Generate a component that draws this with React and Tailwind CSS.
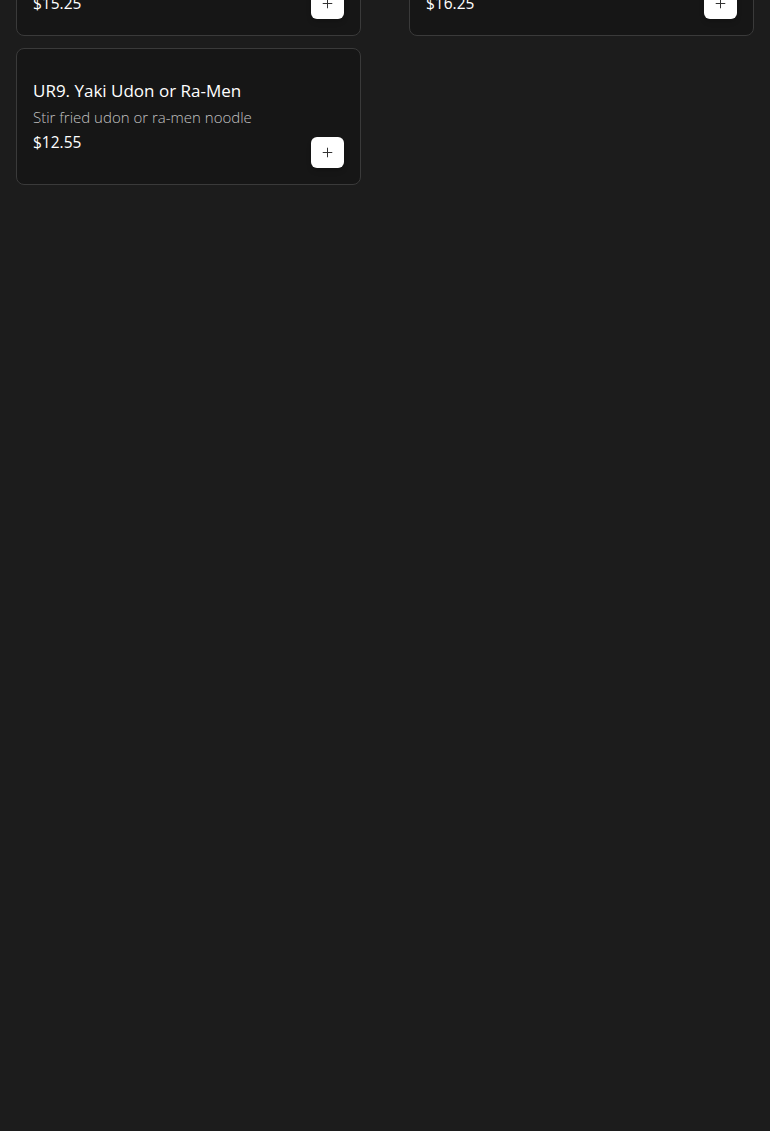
import { Plus } from 'lucide-react';

const items = [
  {
    id: 'UR7',
    name: 'UR7. Nabeyaki Udon',
    description: 'Udon noodle soup with shrimp tempura, chicken, egg and vegetables',
    price: '$15.25',
  },
  {
    id: 'UR8',
    name: 'UR8. Tempura Udon',
    description: 'Udon noodle soup served with shrimp and vegetable tempura',
    price: '$16.25',
  },
  {
    id: 'UR9',
    name: 'UR9. Yaki Udon or Ra-Men',
    description: 'Stir fried udon or ra-men noodle',
    price: '$12.55',
  },
];

const MenuCard = ({ item }) => {
  return (
    <div className="flex min-h-[137px] items-center justify-between gap-4 rounded-lg border border-[#3a3a3a] bg-[#161616] p-4">
      <div className="flex flex-col">
        <h3 className="text-[17px] font-medium leading-6 text-white">{item.name}</h3>
        <p className="mt-1 text-[15px] font-light leading-5 text-[#c2c2c2]">{item.description}</p>
        <span className="mt-[3px] text-[15.5px] leading-6 text-white">{item.price}</span>
      </div>
      <button className="flex h-[31px] w-[33px] shrink-0 items-center justify-center self-end rounded-md bg-white shadow-md">
        <Plus size={15} strokeWidth={1.6} className="text-[#333]" />
      </button>
    </div>
  );
};

export default function App() {
  return (
    <div
      className="h-screen overflow-hidden bg-[#1c1c1c]"
      style={{ fontFamily: '"Open Sans", "Liberation Sans", sans-serif' }}
    >
      {/* list is scrolled: first row sits partly above the fold */}
      <div className="-mt-[101px] grid grid-cols-2 gap-x-12 gap-y-3 px-4">
        {items.map((item) => (
          <MenuCard key={item.id} item={item} />
        ))}
      </div>
    </div>
  );
}
